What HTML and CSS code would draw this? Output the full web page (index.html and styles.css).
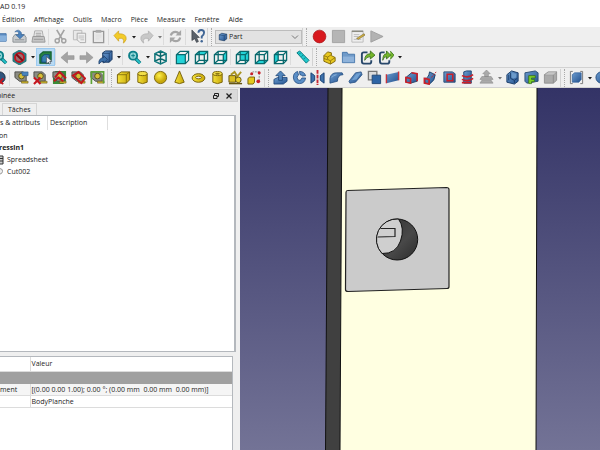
FILE: index.html
```html
<!DOCTYPE html>
<html lang="fr">
<head>
<meta charset="utf-8">
<title>FreeCAD 0.19</title>
<link rel="stylesheet" href="styles.css">
</head>
<body>
<svg class="sprite" aria-hidden="true">
  <defs>
    <linearGradient id="blue" x1="0" y1="0" x2="1" y2="1"><stop offset="0" stop-color="#6c9ccf"/><stop offset="1" stop-color="#24528f"/></linearGradient>
    <linearGradient id="gold" x1="0" y1="0" x2="1" y2="0"><stop offset="0" stop-color="#f3e03a"/><stop offset="1" stop-color="#c9a90a"/></linearGradient>
    <radialGradient id="ball" cx=".4" cy=".35"><stop offset="0" stop-color="#fff04a"/><stop offset="1" stop-color="#c8a80b"/></radialGradient>
  </defs>
  <symbol id="folder" viewBox="0 0 16 16"><path d="M2 13V3h4l1 2h7v8z" fill="#5f8fc4" stroke="#4474a9"/><path d="M2 13l2-6h11l-1 6z" fill="#88b1dc"/></symbol>
  <symbol id="save" viewBox="0 0 16 16"><path d="M1 9l2-3h10l2 3v5H1z" fill="#c9ccce" stroke="#8b9093"/><path d="M3 11.500h10" stroke="#8b9093"/><path d="M3 3q4-4 7 1v2h3l-4.500 4.500L4 6h3V4q-1-2-4-1z" fill="#4d83bd" stroke="#2d5d93" stroke-width=".6"/></symbol>
  <symbol id="print" viewBox="0 0 16 16"><path d="M4 2h8l1 6H3z" fill="#eee" stroke="#aaa"/><path d="M2 8h12l1 6H1z" fill="#c6c6c6" stroke="#999"/><path d="M3 11h10M5 4.500h6M5 6.500h6" stroke="#999"/></symbol>
  <symbol id="cut" viewBox="0 0 16 16"><path d="M4 1l6 10M12 1L6 11" stroke="#a3a3a3" stroke-width="1.800"/><circle cx="4.500" cy="12.500" r="2.200" fill="none" stroke="#a3a3a3" stroke-width="1.600"/><circle cx="11.500" cy="12.500" r="2.200" fill="none" stroke="#a3a3a3" stroke-width="1.600"/></symbol>
  <symbol id="copy" viewBox="0 0 16 16"><path d="M1.500 1.500h9v10h-9z" fill="#e9e9e9" stroke="#bbb"/><path d="M5.500 4.500h9v10h-6l-3-3z" fill="#efefef" stroke="#aaa"/><path d="M7 7.500h6M7 9.500h6M9 11.500h4" stroke="#bbb"/></symbol>
  <symbol id="paste" viewBox="0 0 16 16"><path d="M2.500 2.500h11v12h-11z" fill="#e9e9e9" stroke="#999" stroke-width="1.400"/><path d="M5 1h6v3H5z" fill="#aaa"/><path d="M5 6.500h6M5 8.500h6M5 10.500h4" stroke="#ddd"/></symbol>
  <symbol id="undo" viewBox="0 0 16 16"><path d="M1 7l5-5v3q9 0 8 6-1 3-3 4 2-6-5-5v3z" fill="#f3cb28" stroke="#c99d18" stroke-width=".7"/></symbol>
  <symbol id="redo" viewBox="0 0 16 16"><path d="M15 7l-5-5v3q-9 0-8 6 1 3 3 4-2-6 5-5v3z" fill="#c8c8c8" stroke="#aaa" stroke-width=".7"/></symbol>
  <symbol id="refresh" viewBox="0 0 16 16"><path d="M3 7q1-4 5-4 2 0 4 2M13 9q-1 4-5 4-2 0-4-2" fill="none" stroke="#a5a5a5" stroke-width="2.400"/><path d="M14 1v6H8zM2 15V9h6z" fill="#a5a5a5"/></symbol>
  <symbol id="help" viewBox="0 0 16 16"><path d="M2 1l8 8-3 .3 2 4-2 1-2-4-3 2z" fill="#59616a" stroke="#31363b" stroke-width=".6"/><path d="M9 4q0-3 3-3t3 3q0 2-2.500 4v2" fill="none" stroke="#3f6595" stroke-width="2"/><circle cx="12.500" cy="13" r="1.300" fill="#3f6595"/></symbol>
  <symbol id="record" viewBox="0 0 16 16"><circle cx="8" cy="8" r="6.800" fill="#d8191e" stroke="#a40d12" stroke-width=".7"/></symbol>
  <symbol id="stop" viewBox="0 0 16 16"><path d="M1.500 1.500h13v13h-13z" fill="#b5b5b5" stroke="#a2a2a2"/></symbol>
  <symbol id="note" viewBox="0 0 16 16"><path d="M2 2h12v12H2z" fill="#eee" stroke="#bbb"/><path d="M2 2.500h12" stroke="#8b8b80" stroke-width="1.500"/><path d="M4 6h6M4 8h5M4 11h8" stroke="#bbb"/><path d="M7 10l8-5 1 1.500L9 11z" fill="#d5b33c" stroke="#6f5d26" stroke-width=".6"/></symbol>
  <symbol id="play" viewBox="0 0 16 16"><path d="M2 2l13 6-13 6z" fill="#b2b2b2" stroke="#a0a0a0"/></symbol>
  <symbol id="cube" viewBox="0 0 16 16"><path d="M2 4.500L6 2l8 1.500V11l-4 3-8-1.500z" fill="url(#blue)" stroke="#17365f"/><path d="M2 4.500L10 6v8M10 6l4-2.500" fill="none" stroke="#17365f" stroke-width=".8"/></symbol>
  <symbol id="zoomfit" viewBox="0 0 16 16"><path d="M9 9l5 5" stroke="#086f78" stroke-width="3.600"/><path d="M9 9l5 5" stroke="#26c5cb" stroke-width="2"/><circle cx="6.500" cy="6" r="4.300" fill="#8fd5d7" stroke="#0b7f88" stroke-width="2"/><path d="M4.500 6h4M6.500 4v4" stroke="#0b7f88"/></symbol>
  <symbol id="forbid" viewBox="0 0 16 16"><path d="M8 0l7 4v8l-7 4-7-4V4z" fill="#27858b" stroke="#125a60" stroke-width=".7"/><circle cx="8" cy="8" r="4.800" fill="#9d6e70" stroke="#c3141e" stroke-width="2"/><path d="M4.500 4.500l7 7" stroke="#7a0c14" stroke-width="2"/></symbol>
  <symbol id="boxsel" viewBox="0 0 16 16"><path d="M2 5l3.500-3H14v8.500L11.500 14H2z" fill="#268240" stroke="#105f2c" stroke-width="1.200"/><path d="M4 7.500L6.500 5H12v6l-2 2H4z" fill="#377fb0" stroke="#174a76"/><path d="M9 7l6 5-2.500.3 1 2-1.500.7-1-2L9 15z" fill="#eee" stroke="#334" stroke-width=".6"/></symbol>
  <symbol id="left" viewBox="0 0 16 16"><path d="M1 8l7-6v4h7v4H8v4z" fill="#a3a3a3" stroke="#919191" stroke-width=".6"/></symbol>
  <symbol id="right" viewBox="0 0 16 16"><path d="M15 8L8 2v4H1v4h7v4z" fill="#a3a3a3" stroke="#919191" stroke-width=".6"/></symbol>
  <symbol id="link" viewBox="0 0 16 16"><path d="M5 3l3-2h7v9l-3 3H5z" fill="url(#blue)" stroke="#17365f"/><path d="M5 3.500h7V13M12 3.500L15 1" fill="none" stroke="#17365f" stroke-width=".7"/><path d="M1 15q-1-6 5-7V6l4 4-4 4v-2q-3 0-5 3z" fill="#3c70a9" stroke="#17365f" stroke-width=".7"/></symbol>
  <symbol id="iso" viewBox="0 0 16 16"><path d="M8 1l6 3v8l-6 3-6-3V4zM2 4l6 3 6-3M8 7v8M2 12l6-3 6 3M8 1v8" fill="none" stroke="#0b666b" stroke-width="1.500"/><path d="M8 1l6 3v8l-6 3-6-3V4z" fill="none" stroke="#1a9ca1" stroke-width=".6"/></symbol>
  <symbol id="wire" viewBox="0 0 16 16"><path d="M1.500 5l4-3.500h9V11L11 14.500H1.500zM1.500 5H11v9.500M11 5l3.500-3.500M5.500 1.500V11L1.500 14.500M5.500 11h9" fill="none" stroke="#096a6e" stroke-width="1.400"/></symbol>
  <symbol id="cubeedge" viewBox="0 0 16 16"><path d="M1.500 5l4-3.500h9V11L11 14.500H1.500zM1.500 5H11v9.500M11 5l3.500-3.500" fill="none" stroke="#096a6e" stroke-width="1.300"/></symbol>
  <symbol id="front" viewBox="0 0 16 16"><path d="M1.500 5H11v9.500H1.500z" fill="#22d2d6"/><use href="#cubeedge"/></symbol>
  <symbol id="top" viewBox="0 0 16 16"><path d="M1.500 5l4-3.500h9L11 5z" fill="#22d2d6"/><use href="#wire"/></symbol>
  <symbol id="side" viewBox="0 0 16 16"><path d="M11 5l3.500-3.500V11L11 14.500z" fill="#22d2d6"/><use href="#wire"/></symbol>
  <symbol id="rear" viewBox="0 0 16 16"><path d="M5.500 1.500h9V11h-9z" fill="#22d2d6"/><use href="#wire"/></symbol>
  <symbol id="bottom" viewBox="0 0 16 16"><path d="M1.500 14.500l4-3.500h9L11 14.500z" fill="#22d2d6"/><use href="#wire"/></symbol>
  <symbol id="leftside" viewBox="0 0 16 16"><path d="M1.500 5l4-3.500V11l-4 3.500z" fill="#22d2d6"/><use href="#wire"/></symbol>
  <symbol id="ruler" viewBox="0 0 16 16"><path d="M2 3l3-2 10 10-3 3z" fill="#22c8cc" stroke="#087a80"/><path d="M6 3L4.500 4.500M8.500 5.500L7 7M11 8l-1.500 1.500" stroke="#087a80"/></symbol>
  <symbol id="steps" viewBox="0 0 16 16"><path d="M2 6l4-4 4 1v3l4 2v4l-5 3-7-3z" fill="#e8c81f" stroke="#80670a"/><path d="M2 6l4 1.500L10 5M6 7.500V10l3 1.500L14 8M9 11.500V15M2 9l4 1.500" fill="none" stroke="#80670a" stroke-width=".8"/></symbol>
  <symbol id="dir" viewBox="0 0 16 16"><path d="M1.500 13.500v-11h5l1 2h7v9z" fill="#6f9ac9" stroke="#4776ab"/><path d="M2 7h12v6H2z" fill="#8eb2da"/></symbol>
  <symbol id="export" viewBox="0 0 16 16"><path d="M8 2.500H4q-2 0-2 2V12q0 2.500 2 2.500h6q2 0 2-2V11" fill="none" stroke="#29486b" stroke-width="2"/><path d="M5 11q0-7 6-7V1l5 4.500-5 4V7q-4 0-6 4z" fill="#74b62b" stroke="#2c6411" stroke-width=".8"/></symbol>
  <symbol id="exportall" viewBox="0 0 16 16"><path d="M6 2.500H3q-2 0-2 2V12q0 2.500 2 2.500h6q2 0 2-2V11" fill="none" stroke="#29486b" stroke-width="2"/><path d="M4 11q0-7 4-7V1l4.500 4.500L8 9.500V7q-3 0-4 4zM12 1l4 4.500-4 4.500" fill="#74b62b" stroke="#2c6411" stroke-width=".8"/></symbol>
  <symbol id="tape" viewBox="0 0 16 16"><path d="M1 2h9l3 3v7H6L1 8z" fill="#8c8c84" stroke="#4b4b47"/><circle cx="8" cy="6.500" r="3" fill="#d7bf38" stroke="#55501e"/><path d="M8 12h7v2H8z" fill="#d5ba2c" stroke="#5f531a" stroke-width=".6"/></symbol>
  <symbol id="tapelink" viewBox="0 0 16 16"><use href="#tape"/><path d="M8 2h7v4H9z" fill="#4a83bc" stroke="#255585" stroke-width=".6"/></symbol>
  <symbol id="tapedel" viewBox="0 0 16 16"><use href="#tape"/><path d="M1 8l7 7M8 8l-7 7" stroke="#c5151d" stroke-width="2.200"/></symbol>
  <symbol id="tapeall" viewBox="0 0 16 16"><path d="M1 3l3-2h11v11l-3 3H1z" fill="#3c8b38"/><use href="#tape"/><path d="M3 8l5-6 7 7M2 12l5-4 5 4" fill="none" stroke="#c5151d" stroke-width="2"/></symbol>
  <symbol id="tapered" viewBox="0 0 16 16"><use href="#tape"/><path d="M2 6l6-4 7 7-4 5z" fill="none" stroke="#c5151d" stroke-width="2"/></symbol>
  <symbol id="tapegreen" viewBox="0 0 16 16"><use href="#tape"/><path d="M1.500 15V2h13v12" fill="none" stroke="#5da336" stroke-width="1.800"/></symbol>
  <symbol id="tapeblue" viewBox="0 0 16 16"><circle cx="8" cy="8" r="6" fill="#31557d" stroke="#18283b"/><path d="M5 10l7 5M12 9l-5 6" stroke="#c5151d" stroke-width="2"/></symbol>
  <symbol id="box" viewBox="0 0 16 16"><path d="M1.500 5l4-3h9v8.500L11 14H1.500z" fill="url(#gold)" stroke="#76610b"/><path d="M1.500 5H11v9M11 5l3.500-3" fill="none" stroke="#76610b" stroke-width=".8"/></symbol>
  <symbol id="cyl" viewBox="0 0 16 16"><path d="M3 4v9q5 3 10 0V4" fill="url(#gold)" stroke="#76610b"/><ellipse cx="8" cy="3.800" rx="5" ry="2.200" fill="#f2df4a" stroke="#76610b"/></symbol>
  <symbol id="sphere" viewBox="0 0 16 16"><circle cx="8" cy="8" r="6.500" fill="url(#ball)" stroke="#7a640b"/></symbol>
  <symbol id="cone" viewBox="0 0 16 16"><path d="M8 1l5 12q-5 3-10 0z" fill="url(#gold)" stroke="#76610b"/></symbol>
  <symbol id="torus" viewBox="0 0 16 16"><ellipse cx="8" cy="8.500" rx="6.800" ry="4.600" fill="url(#gold)" stroke="#76610b"/><ellipse cx="8" cy="8" rx="3" ry="1.400" fill="#efefef" stroke="#76610b"/></symbol>
  <symbol id="tube" viewBox="0 0 16 16"><use href="#cyl"/><ellipse cx="8" cy="4" rx="2.500" ry="1" fill="#8f790f"/></symbol>
  <symbol id="prims" viewBox="0 0 16 16"><path d="M1 6h7v7H1z" fill="#dbbf23" stroke="#675611"/><path d="M9 8l5-6M3 5l4-3 3 5" fill="none" stroke="#aa9422" stroke-width="2"/><circle cx="11" cy="10.500" r="3" fill="#e8cf2c" stroke="#675611"/><path d="M1 14.500h14" stroke="#675611" stroke-width="1.500"/></symbol>
  <symbol id="shape" viewBox="0 0 16 16"><path d="M1 9l2-1.500h5V13l-1.500 2H1z" fill="#e5c91e" stroke="#76610b"/><path d="M4 5l2-3h7v9h-2" fill="none" stroke="#888" stroke-dasharray="2 1"/><circle cx="5" cy="4" r="1.600" fill="#c9202a"/><circle cx="13" cy="3" r="1.600" fill="#c9202a"/><circle cx="12" cy="12" r="2" fill="#c9202a"/></symbol>
  <symbol id="extrude" viewBox="0 0 16 16"><path d="M1 10l4-2h10v4l-4 3H1z" fill="url(#blue)" stroke="#173f72" stroke-width=".8"/><path d="M8 1l5 5h-3v5H6V6H3z" fill="#5286bd" stroke="#173f72" stroke-width=".8"/></symbol>
  <symbol id="revolve" viewBox="0 0 16 16"><path d="M6 1.500Q1 3 1.500 8.500 2.500 14.500 8 14.500t6.500-6h-4q-.5 2.500-2.500 2.500-2.500 0-2.500-3Q5.500 6 7 5.500z" fill="#5b8ec6" stroke="#1c467b" stroke-width=".8"/><path d="M8 1.500q5 0 6.500 4.500l-3.500.5Q10.500 5 8.500 5z" fill="#5b8ec6" stroke="#1c467b" stroke-width=".8"/></symbol>
  <symbol id="mirror" viewBox="0 0 16 16"><path d="M1 3l4 3v5l-4 3zM15 3l-4 3v5l4 3z" fill="#3d71ac" stroke="#173f72"/><path d="M8 0v16" stroke="#c72834" stroke-width="2" stroke-dasharray="4 1"/></symbol>
  <symbol id="fillet" viewBox="0 0 16 16"><path d="M1 14V9q1-6 7-6h6l1 2q-6 0-6 7z" fill="url(#blue)" stroke="#254f82" stroke-width=".8"/><path d="M3 8q2-3 5-3" fill="none" stroke="#8db6df"/></symbol>
  <symbol id="chamfer" viewBox="0 0 16 16"><path d="M1 12L8 3l6-1 1 3-7 8-6 1z" fill="url(#blue)" stroke="#254f82" stroke-width=".8"/><path d="M4 11l5-7 5-1-5 7z" fill="#6f9fd1"/></symbol>
  <symbol id="face" viewBox="0 0 16 16"><path d="M1.500 1.500h9v9h-9z" fill="#ddd" stroke="#777" stroke-width="1.400"/><path d="M5.500 5.500h9v9h-9z" fill="#2e65a5" stroke="#234a78"/></symbol>
  <symbol id="ruled" viewBox="0 0 16 16"><path d="M1.500 5l13-3v9l-13 3z" fill="url(#blue)"/><path d="M1.500 4.500V14M14.500 1.500V11" stroke="#c9333b" stroke-width="1.500"/></symbol>
  <symbol id="loft" viewBox="0 0 16 16"><path d="M2 8l6-5 6 1v8l-7 2-5-1z" fill="url(#blue)" stroke="#27466a"/><path d="M2 8l5 1v5l-5-1zM8 3l6 1v8" fill="none" stroke="#c91f29" stroke-width="1.700"/></symbol>
  <symbol id="sweep" viewBox="0 0 16 16"><path d="M2 9q4 0 5-7l6 3q0 6-6 10l-5-1z" fill="url(#blue)" stroke="#193e6a"/><path d="M1.500 9l5 1v5l-5-1z" fill="none" stroke="#c91f29" stroke-width="1.800"/><path d="M9 8l5-6" stroke="#c91f29" stroke-dasharray="2 1"/></symbol>
  <symbol id="section" viewBox="0 0 16 16"><path d="M2 2h9l3 2v9H2z" fill="url(#blue)" stroke="#294f7a"/><path d="M5.500 4.500h6v7h-6z" fill="none" stroke="#c91f29" stroke-width="1.600"/></symbol>
  <symbol id="cross" viewBox="0 0 16 16"><path d="M4 2l3-1h5v13H4z" fill="url(#blue)" stroke="#1c4575"/><path d="M2 6q7 3 12-1M2 10q7 3 12-1M2 13.500h10" fill="none" stroke="#c91f29" stroke-width="1.700"/></symbol>
  <symbol id="offset" viewBox="0 0 16 16"><path d="M8 0l4 4h-2v3H6V4H4zM3 7h10l2 3H1zM3 11h10l2 3H1z" fill="#aaa" stroke="#888" stroke-width=".6"/></symbol>
  <symbol id="thick" viewBox="0 0 16 16"><path d="M2 5l5-4 7 2v9l-4 3-8-2z" fill="url(#blue)" stroke="#173b67"/><path d="M6 3v6l4 2 3-2M10 11v3M4 5v6" fill="none" stroke="#173b67"/><path d="M7 3l5 1v4l-3 1-2-1z" fill="#6b9aca"/></symbol>
  <symbol id="project" viewBox="0 0 16 16"><path d="M1 3l11-2 3 2v9L3 14l-2-2z" fill="url(#blue)" stroke="#2b4e75"/><path d="M5 14.500V6h7v2.500H8V10h3v2.500H8v2z" fill="#7bcf28" stroke="#346d17" stroke-width=".8"/></symbol>
  <symbol id="greybox" viewBox="0 0 16 16"><path d="M1.500 5l4-3h9v9L11 14H1.500z" fill="#aaa" stroke="#929292"/><path d="M1.500 5H11v9M11 5l3.500-3" fill="none" stroke="#8b8b8b"/><path d="M2 5l4-2.500h8L11 5z" fill="#c6c6c6"/></symbol>
  <symbol id="compound" viewBox="0 0 16 16"><path d="M3.500 5L6 3h7v7l-2.500 3h-7z" fill="url(#blue)" stroke="#2a5c98" stroke-width=".7"/><path d="M4 1.500H1.500v13H4M12 1.500h2.500v13H12" fill="none" stroke="#777"/></symbol>
  <symbol id="bool" viewBox="0 0 16 16"><circle cx="7" cy="8" r="6" fill="url(#blue)" stroke="#254f82"/></symbol>
  <symbol id="drop" viewBox="0 0 6 6"><path d="M1 2h4L3 4.500z" fill="currentColor"/></symbol>
  <symbol id="chevron" viewBox="0 0 8 8"><path d="M1 2.500l3 3 3-3" fill="none" stroke="#777"/></symbol>
  <symbol id="restore" viewBox="0 0 8 8"><path d="M2.500 3V1.500h4v3H5M1.500 3.500h3.500v3H1.500z" fill="none" stroke="#222"/></symbol>
  <symbol id="close" viewBox="0 0 8 8"><path d="M1.500 1.500l5 5M6.500 1.500l-5 5" stroke="#222" stroke-width="1.300"/></symbol>
</svg>

<header class="titlebar">AD 0.19</header>
<nav class="menubar">
  <a href="#">Édition</a><a href="#">Affichage</a><a href="#">Outils</a><a href="#">Macro</a><a href="#">Pièce</a><a href="#">Measure</a><a href="#">Fenêtre</a><a href="#">Aide</a>
</nav>

<div class="toolbar">
  <button aria-label="Ouvrir"><svg><use href="#folder"/></svg></button>
  <button aria-label="Enregistrer"><svg><use href="#save"/></svg></button>
  <button aria-label="Imprimer"><svg><use href="#print"/></svg></button>
  <span class="sep"></span>
  <button aria-label="Couper"><svg><use href="#cut"/></svg></button>
  <button aria-label="Copier"><svg><use href="#copy"/></svg></button>
  <button aria-label="Coller"><svg><use href="#paste"/></svg></button>
  <span class="sep"></span>
  <button aria-label="Annuler"><svg><use href="#undo"/></svg></button>
  <button class="drop" aria-label="Liste des annulations"><svg><use href="#drop"/></svg></button>
  <button aria-label="Rétablir"><svg><use href="#redo"/></svg></button>
  <button class="drop muted" aria-label="Liste des rétablissements"><svg><use href="#drop"/></svg></button>
  <span class="sep"></span>
  <button aria-label="Rafraîchir"><svg><use href="#refresh"/></svg></button>
  <span class="sep"></span>
  <button aria-label="Aide contextuelle"><svg><use href="#help"/></svg></button>
  <span class="handle"></span>
  <div class="workbench">
    <svg class="workbench-icon"><use href="#cube"/></svg>
    <select aria-label="Atelier"><option>Part</option></select>
    <svg class="workbench-arrow"><use href="#chevron"/></svg>
  </div>
  <span class="handle"></span>
  <button aria-label="Enregistrer une macro"><svg><use href="#record"/></svg></button>
  <button aria-label="Arrêter"><svg><use href="#stop"/></svg></button>
  <button aria-label="Macros"><svg><use href="#note"/></svg></button>
  <button aria-label="Exécuter"><svg><use href="#play"/></svg></button>
</div>

<div class="toolbar">
  <button aria-label="Tout afficher"><svg><use href="#zoomfit"/></svg></button>
  <button aria-label="Style de représentation"><svg><use href="#forbid"/></svg></button>
  <button class="drop" aria-label="Styles"><svg><use href="#drop"/></svg></button>
  <button class="active" aria-label="Boîte englobante"><svg><use href="#boxsel"/></svg></button>
  <span class="sep"></span>
  <button aria-label="Précédent"><svg><use href="#left"/></svg></button>
  <button aria-label="Suivant"><svg><use href="#right"/></svg></button>
  <button aria-label="Objet lié"><svg><use href="#link"/></svg></button>
  <button class="drop" aria-label="Liens"><svg><use href="#drop"/></svg></button>
  <span class="sep"></span>
  <button aria-label="Zoom"><svg><use href="#zoomfit"/></svg></button>
  <button class="drop" aria-label="Options de zoom"><svg><use href="#drop"/></svg></button>
  <button aria-label="Isométrique"><svg><use href="#iso"/></svg></button>
  <span class="sep"></span>
  <button aria-label="Avant"><svg><use href="#front"/></svg></button>
  <button aria-label="Dessus"><svg><use href="#top"/></svg></button>
  <button aria-label="Droite"><svg><use href="#side"/></svg></button>
  <span class="sep"></span>
  <button aria-label="Arrière"><svg><use href="#rear"/></svg></button>
  <button aria-label="Dessous"><svg><use href="#bottom"/></svg></button>
  <button aria-label="Gauche"><svg><use href="#leftside"/></svg></button>
  <span class="sep"></span>
  <button aria-label="Mesurer"><svg><use href="#ruler"/></svg></button>
  <span class="handle"></span>
  <button aria-label="Créer une pièce"><svg><use href="#steps"/></svg></button>
  <button aria-label="Créer un groupe"><svg><use href="#dir"/></svg></button>
  <button aria-label="Créer un lien"><svg><use href="#export"/></svg></button>
  <button aria-label="Actions de lien"><svg><use href="#exportall"/></svg></button>
  <button class="drop" aria-label="Plus de liens"><svg><use href="#drop"/></svg></button>
</div>

<div class="toolbar toolbar-parts">
  <button aria-label="Mesure"><svg><use href="#tapeblue"/></svg></button>
  <span class="sep"></span>
  <button aria-label="Rafraîchir les mesures"><svg><use href="#tapelink"/></svg></button>
  <button aria-label="Effacer les mesures"><svg><use href="#tapedel"/></svg></button>
  <button aria-label="Basculer tout"><svg><use href="#tapeall"/></svg></button>
  <button aria-label="Basculer 3D"><svg><use href="#tapered"/></svg></button>
  <button aria-label="Basculer delta"><svg><use href="#tapegreen"/></svg></button>
  <span class="handle"></span>
  <div class="group solids">
    <button aria-label="Cube"><svg><use href="#box"/></svg></button>
    <button aria-label="Cylindre"><svg><use href="#cyl"/></svg></button>
    <button aria-label="Sphère"><svg><use href="#sphere"/></svg></button>
    <button aria-label="Cône"><svg><use href="#cone"/></svg></button>
    <button aria-label="Tore"><svg><use href="#torus"/></svg></button>
    <button aria-label="Tube"><svg><use href="#tube"/></svg></button>
    <button aria-label="Primitives"><svg><use href="#prims"/></svg></button>
    <button aria-label="Générateur de forme"><svg><use href="#shape"/></svg></button>
  </div>
  <span class="handle"></span>
  <div class="group operations">
    <button aria-label="Extrusion"><svg><use href="#extrude"/></svg></button>
    <button aria-label="Révolution"><svg><use href="#revolve"/></svg></button>
    <button aria-label="Miroir"><svg><use href="#mirror"/></svg></button>
    <button aria-label="Congé"><svg><use href="#fillet"/></svg></button>
    <button aria-label="Chanfrein"><svg><use href="#chamfer"/></svg></button>
    <button aria-label="Face"><svg><use href="#face"/></svg></button>
    <button aria-label="Surface réglée"><svg><use href="#ruled"/></svg></button>
    <button aria-label="Lissage"><svg><use href="#loft"/></svg></button>
    <button aria-label="Balayage"><svg><use href="#sweep"/></svg></button>
    <button aria-label="Section"><svg><use href="#section"/></svg></button>
    <button aria-label="Coupes"><svg><use href="#cross"/></svg></button>
    <button aria-label="Décalage"><svg><use href="#offset"/></svg></button>
  </div>
  <button class="drop muted" aria-label="Décalages"><svg><use href="#drop"/></svg></button>
  <button aria-label="Épaisseur"><svg><use href="#thick"/></svg></button>
  <button aria-label="Projection"><svg><use href="#project"/></svg></button>
  <button aria-label="Apparence"><svg><use href="#greybox"/></svg></button>
  <span class="handle"></span>
  <button aria-label="Composé"><svg><use href="#compound"/></svg></button>
  <button class="drop" aria-label="Composés"><svg><use href="#drop"/></svg></button>
  <button aria-label="Booléen"><svg><use href="#bool"/></svg></button>
</div>

<main class="workspace">
  <aside class="dock">
    <div class="dock-title">
      <span class="dock-name">binée</span>
      <button aria-label="Détacher"><svg><use href="#restore"/></svg></button>
      <button aria-label="Fermer"><svg><use href="#close"/></svg></button>
    </div>
    <div class="tabs"><button class="tab">Tâches</button></div>
    <section class="tree">
      <div class="tree-head"><span>s &amp; attributs</span><span>Description</span></div>
      <ul>
        <li class="root">on</li>
        <li class="doc">ressin1</li>
        <li><svg viewBox="0 0 6 10"><path d="M0 1h3v8H0M0 3.500h3M0 6h3" fill="#ccc" stroke="#333"/></svg>Spreadsheet</li>
        <li><svg viewBox="0 0 6 10"><path d="M0 1.500q3 .5 2.500 3T0 7" fill="#eee" stroke="#999"/></svg>Cut002</li>
      </ul>
    </section>
    <section class="properties">
      <table>
        <thead><tr><th></th><th>Valeur</th></tr></thead>
        <tbody>
          <tr class="category"><td colspan="2"></td></tr>
          <tr class="alt"><td>ment</td><td>[(0.00 0.00 1.00); 0.00 °; (0.00 mm&nbsp; 0.00 mm&nbsp; 0.00 mm)]</td></tr>
          <tr><td></td><td>BodyPlanche</td></tr>
        </tbody>
      </table>
    </section>
  </aside>
  <section class="view">
    <svg viewBox="0 0 360 362" preserveAspectRatio="xMinYMin slice" role="img" aria-label="Vue 3D">
      <defs>
        <linearGradient id="bore" x1="0" y1="0" x2="1" y2="1"><stop offset="0" stop-color="#303030"/><stop offset=".6" stop-color="#484848"/><stop offset="1" stop-color="#2b2b2b"/></linearGradient>
      </defs>
      <path d="M88 0h14l-2 362H85.500z" fill="#404040"/>
      <path d="M102 0h195l-1 362H100z" fill="#ffffe1"/>
      <path d="M88 0L85.500 362M102 0l-2 362M297 0l-1 362" fill="none" stroke="#111"/>
      <path d="M107.500 102.500l99-3q2.500 0 2.500 2v97q0 2-2 2l-99 3q-2.500 0-2.500-2l.5-97q0-2 1.500-2z" fill="#cbcbcb" stroke="#222" stroke-width="1.200"/>
      <circle cx="157.200" cy="151.500" r="20.500" fill="url(#bore)" stroke="#111"/>
      <path d="M158.500 131Q165 140 160.500 153 156 166 142 165.500A20.500 20.500 0 0 1 158.500 131z" fill="#cfcfcf" stroke="#111"/>
      <path d="M140.500 140.500H155v8l-17.500.5" fill="none" stroke="#222" stroke-width="1.200"/>
    </svg>
  </section>
</main>
</body>
</html>
```
FILE: styles.css
```css
* { box-sizing: border-box; }

html, body { height: 100%; }

body {
  margin: 0;
  display: flex;
  flex-direction: column;
  overflow: hidden;
  background: #efefef;
  color: #1c1c1c;
  font: 7px/12px "Open Sans", "Noto Sans", sans-serif;
}

button {
  padding: 0;
  border: 0;
  background: none;
  color: inherit;
  font: inherit;
}

.sprite { position: absolute; width: 0; height: 0; }

.titlebar { background: #fff; height: 14px; line-height: 14px; }

.menubar {
  display: flex;
  gap: 9px;
  height: 13px;
  padding-left: 2px;
  background: #fff;
}
.menubar a { color: inherit; text-decoration: none; }

.toolbar {
  display: flex;
  align-items: center;
  flex: none;
  height: 20px;
  margin-left: -9px;
  border-bottom: 1px solid #d2d2d2;
}
.toolbar + .toolbar { height: 21px; }
.toolbar > * { flex: none; }
.toolbar button {
  display: flex;
  align-items: center;
  justify-content: center;
  width: 19px;
  height: 18px;
}
.toolbar button svg { flex: none; width: 15px; height: 15px; }
.toolbar .drop { width: 7px; }
.toolbar .drop svg { width: 6px; height: 6px; }
.toolbar .muted { color: #777; }
.toolbar .active { background: #b9daf3; border: 1px solid #9ccaf0; }
.sep { width: 3px; height: 16px; border-left: 1px solid #dcdcdc; }
.handle {
  width: 8px;
  height: 18px;
  padding-left: 3px;
  border-left: 1px solid #d2d2d2;
}
.handle::after {
  content: "";
  display: block;
  height: 100%;
  border-left: 1px dotted #aaa;
}
.toolbar + .toolbar-parts { height: 20px; margin-left: -10px; }
.toolbar-parts .handle { width: 7px; }
.group { display: flex; }
.group button { flex: 1; }
.solids { width: 150px; }
.operations { width: 225px; }

.workbench {
  display: flex;
  align-items: center;
  width: 87px;
  height: 14px;
  padding: 0 2px;
  border: 1px solid #bcbcbc;
  background: #e2e2e2;
}
.workbench select {
  flex: 1;
  min-width: 0;
  padding: 0 1px;
  border: 0;
  appearance: none;
  background: none;
  color: inherit;
  font: inherit;
}
.workbench-icon { width: 10px; height: 10px; }
.workbench-arrow { width: 8px; height: 8px; }

.workspace { flex: 1; display: flex; min-height: 0; }

.dock {
  flex: none;
  display: flex;
  flex-direction: column;
  width: 40%;
  padding-top: 1px;
}
.dock-title {
  display: flex;
  align-items: center;
  gap: 5px;
  height: 13px;
  margin-right: 2px;
  padding-right: 4px;
  border: 1px solid #cdcdcd;
  border-left: 0;
  background: #dadada;
}
.dock-name { flex: 1; text-indent: -3px; }
.dock-title button { width: 8px; height: 8px; }
.dock-title svg { display: block; width: 8px; height: 8px; }
.tabs { display: flex; height: 13px; padding: 1px 0 0 2px; }
.tab {
  padding: 0 5px;
  border: 1px solid #d5d5d5;
  border-bottom: 0;
  line-height: 10px;
}

.tree {
  flex: 1;
  margin-right: 4px;
  border: solid #b4b8bd;
  border-width: 1px 2px 1px 0;
  background: #fff;
}
.tree-head { display: flex; height: 14px; line-height: 14px; }
.tree-head span { border-right: 1px solid #dedede; }
.tree-head span:first-child { width: 48px; }
.tree-head span:last-child { width: 60px; padding-left: 2px; }
.tree ul { margin: 0; padding: 0; list-style: none; }
.tree li { display: flex; align-items: center; gap: 1px; height: 12px; }
.tree li svg { width: 6px; height: 10px; }
.root, .doc { text-indent: -1px; }
.doc { font-weight: 700; }

.properties {
  flex: none;
  height: 26%;
  margin: 4px 7px 0 0;
  border: solid #b4b8bd;
  border-width: 1px 1px 0 0;
  background: #fff;
}
.properties table { width: 100%; border-collapse: collapse; table-layout: fixed; }
.properties th, .properties td {
  height: 12px;
  padding: 0 0 0 1px;
  border: 1px solid #dcdcdc;
  border-width: 0 0 1px;
  line-height: 11px;
  font-weight: 400;
  text-align: left;
  white-space: nowrap;
}
.properties th { height: 14px; }
.properties th:first-child { width: 30px; }
.properties tr > :first-child { border-right-width: 1px; padding: 0; }
.properties .category td { border-color: #a0a0a0; background: #a0a0a0; }
.alt { background: #f5f5f5; }

.view {
  flex: 1;
  min-width: 0;
  overflow: hidden;
  background: linear-gradient(#333366, #737396);
}
.view svg { display: block; width: 100%; height: 100%; }
```
